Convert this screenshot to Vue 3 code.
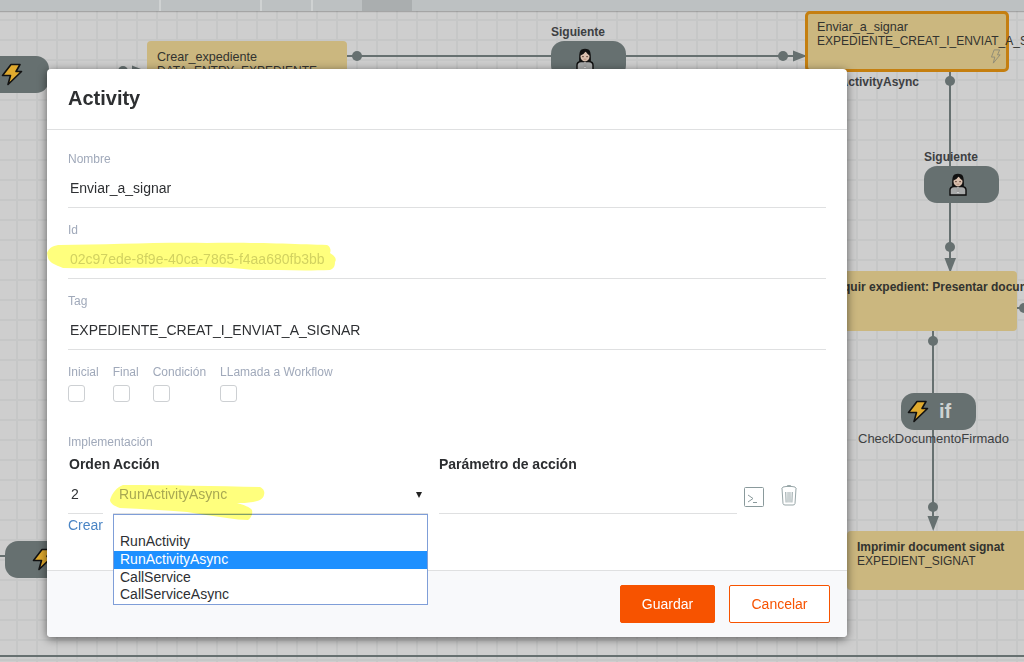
<script setup>
const tabs = [159, 260, 311]

const lines = [
  { x: 347, y: 55, w: 459, h: 2 },
  { x: 0, y: 555, w: 6, h: 2 },
  { x: 949, y: 72, w: 2, h: 186 },
  { x: 932, y: 331, w: 2, h: 190 },
  { x: 1017, y: 307, w: 7, h: 2 },
]

const dots = [
  { x: 123, y: 71 },
  { x: 357, y: 56 },
  { x: 783, y: 56 },
  { x: 950, y: 81 },
  { x: 950, y: 247 },
  { x: 933, y: 341 },
  { x: 933, y: 507 },
  { x: 1024, y: 308 },
]

const arrows = [
  { x: 132, y: 65, dir: 'right' },
  { x: 793, y: 50, dir: 'right' },
  { x: 943, y: 258, dir: 'down' },
  { x: 926, y: 516, dir: 'down' },
]

const tasks = [
  { x: 147, y: 41, w: 200, h: 60, title: 'Crear_expediente', tag: 'DATA_ENTRY_EXPEDIENTE' },
  { x: 817, y: 271, w: 200, h: 60, title: 'Adquir expedient: Presentar document', tag: '', strong: true },
  { x: 847, y: 531, w: 200, h: 59, title: 'Imprimir document signat', tag: 'EXPEDIENT_SIGNAT', strong: true },
]

const pills = [
  { x: -26, y: 56, kind: 'bolt' },
  { x: 5, y: 541, kind: 'bolt' },
  { x: 551, y: 41, kind: 'user', label: 'Siguiente' },
  { x: 924, y: 166, kind: 'user', label: 'Siguiente' },
]

const options = ['RunActivity', 'RunActivityAsync', 'CallService', 'CallServiceAsync']
</script>

<template>
  <div class="page">
    <div class="topbar">
      <span v-for="t in tabs" :key="t" class="topbar__tick" :style="{ left: t + 'px' }"></span>
      <span class="topbar__active"></span>
    </div>

    <section class="canvas">
      <i v-for="(l, i) in lines" :key="'l' + i" class="wire" :style="{ left: l.x + 'px', top: l.y + 'px', width: l.w + 'px', height: l.h + 'px' }"></i>
      <i v-for="(d, i) in dots" :key="'d' + i" class="dot" :style="{ left: d.x - 5 + 'px', top: d.y - 5 + 'px' }"></i>
      <svg v-for="(a, i) in arrows" :key="'a' + i" class="arrow" :style="{ left: a.x + 'px', top: a.y + 'px' }" width="15" height="15" viewBox="0 0 15 15">
        <path v-if="a.dir === 'right'" d="M0 0.5 L14 6 L0 11.5 Z" fill="#667070" />
        <path v-else d="M1.5 0 L13 0 L7.2 15 Z" fill="#667070" />
      </svg>

      <div
        v-for="t in tasks"
        :key="t.title"
        class="task"
        :style="{ left: t.x + 'px', top: t.y + 'px', width: t.w + 'px', height: t.h + 'px' }"
      >
        <div :class="t.strong ? 'task__title--strong' : 'task__title'">{{ t.title }}</div>
        <div>{{ t.tag }}</div>
      </div>

      <div class="task task--selected">
        <div class="task__title">Enviar_a_signar</div>
        <div>EXPEDIENTE_CREAT_I_ENVIAT_A_SIGNAR</div>
        <svg class="task__bolt" width="11" height="15" viewBox="0 0 12 16">
          <path d="M4.5 0.8 L10.5 0.8 L8.2 6.2 L11 6.2 L3.6 15.2 L5.2 8.6 L1.6 8.6 Z" fill="none" stroke="#8d8a76" stroke-width="1" />
        </svg>
      </div>
      <div class="node-caption node-caption--async">RunActivityAsync</div>

      <template v-for="p in pills" :key="p.x">
        <div class="pill" :style="{ left: p.x + 'px', top: p.y + 'px' }">
          <svg v-if="p.kind === 'bolt'" class="bolt" width="22" height="23" viewBox="0 0 22 23">
            <path d="M10 1.5 L19 1.5 L15 8.5 L20.5 8.5 L7 21.5 L9.5 12.5 L1.5 12.5 Z" fill="#e0aa2e" stroke="#111" stroke-width="1.6" stroke-linejoin="round" />
          </svg>
          <svg v-else class="person" width="18" height="23" viewBox="0 0 18 23">
            <path d="M1 22 L1 17 Q1 14 5 13.5 L13 13.5 Q17 14 17 17 L17 22 Z" fill="#a7a9a9" stroke="#0c0c0c" stroke-width="1.4" />
            <path d="M8 14 L10 14 L9.6 20 L8.4 20 Z" fill="#e4e4e4" />
            <path d="M8.4 14 L8.4 19 M9.6 14 L9.6 19" stroke="#5d5d5d" stroke-width="0.5" />
            <path d="M3.2 14 Q2.6 3 5.5 1.6 Q9 -0.2 12.5 1.6 Q15.4 3 14.8 14 Z" fill="#111" />
            <ellipse cx="9" cy="8.5" rx="4.5" ry="5" fill="#d9bfad" />
            <path d="M4.4 7.5 Q8 6.5 9.6 3.6 Q11.5 6.5 13.6 7.5 L13.8 3.6 L9 2 L4.4 3.6 Z" fill="#111" />
            <rect x="6.3" y="8" width="1.3" height="1.2" fill="#50362a" />
            <rect x="10.4" y="8" width="1.3" height="1.2" fill="#50362a" />
            <path d="M7.6 11.2 L10.4 11.2" stroke="#a9806c" stroke-width="0.7" />
          </svg>
        </div>
        <div v-if="p.label" class="node-caption node-caption--pill" :style="{ left: p.x + 'px', top: p.y - 17 + 'px' }">{{ p.label }}</div>
      </template>

      <div class="pill pill--if">
        <svg class="bolt" width="22" height="23" viewBox="0 0 22 23">
          <path d="M10 1.5 L19 1.5 L15 8.5 L20.5 8.5 L7 21.5 L9.5 12.5 L1.5 12.5 Z" fill="#e0aa2e" stroke="#111" stroke-width="1.6" stroke-linejoin="round" />
        </svg>
        <span class="pill__if">if</span>
      </div>
      <div class="node-caption node-caption--check">CheckDocumentoFirmado</div>
      <div class="canvas__floor"></div>
    </section>

    <div class="modal">
      <header class="modal__head">Activity</header>

      <div class="modal__body">
        <div class="field">
          <label>Nombre</label>
          <div class="field__value">Enviar_a_signar</div>
        </div>
        <div class="field">
          <label>Id</label>
          <div class="field__value field__value--disabled">02c97ede-8f9e-40ca-7865-f4aa680fb3bb</div>
        </div>
        <div class="field">
          <label>Tag</label>
          <div class="field__value">EXPEDIENTE_CREAT_I_ENVIAT_A_SIGNAR</div>
        </div>

        <div class="checks">
          <div class="check"><label>Inicial</label><span class="check__box"></span></div>
          <div class="check"><label>Final</label><span class="check__box"></span></div>
          <div class="check"><label>Condición</label><span class="check__box"></span></div>
          <div class="check"><label>LLamada a Workflow</label><span class="check__box"></span></div>
        </div>

        <label class="impl-label">Implementación</label>

        <div class="impl">
          <div class="impl__head impl__head--order">Orden</div>
          <div class="impl__head">Acción</div>
          <div class="impl__head">Parámetro de acción</div>
          <div></div>

          <div class="impl__cell impl__cell--order">2</div>
          <div class="impl__cell impl__cell--action">
            <span class="impl__selected">RunActivityAsync</span>
            <span class="impl__caret"></span>
            <ul class="dropdown">
              <li></li>
              <li v-for="o in options" :key="o" :class="{ 'is-active': o === 'RunActivityAsync' }">{{ o }}</li>
            </ul>
          </div>
          <div class="impl__cell impl__cell--param"></div>
          <div class="impl__tools">
            <svg width="20" height="20" viewBox="0 0 20 20">
              <rect x="0.5" y="0.5" width="19" height="19" rx="1" fill="#fff" stroke="#8a9a9c" />
              <path d="M4 8 L9 11.5 L4 15" fill="none" stroke="#8a9a9c" />
              <path d="M9 15.5 L13 15.5" stroke="#8a9a9c" />
            </svg>
            <svg class="trash" width="16" height="21" viewBox="0 0 16 21">
              <path d="M1 3.5 Q1 1.5 5 1.5 L11 1.5 Q15 1.5 15 3.5 Q15 5 8 5 Q1 5 1 3.5 Z" fill="#fff" stroke="#98a6a8" />
              <path d="M5.5 1.5 Q5.5 0.5 8 0.5 Q10.5 0.5 10.5 1.5" fill="none" stroke="#98a6a8" />
              <path d="M1 3.5 L2 18.5 Q2.2 20 4 20 L12 20 Q13.8 20 14 18.5 L15 3.5" fill="#fff" stroke="#98a6a8" />
              <path d="M4.7 7 L5.1 17.5 M8 7 L8 17.5 M11.3 7 L10.9 17.5" fill="none" stroke="#98a6a8" />
              <path d="M6.3 7 L6.5 17.5 M9.7 7 L9.5 17.5" fill="none" stroke="#c9d1d2" />
            </svg>
          </div>
        </div>
        <a class="create">Crear</a>
      </div>

      <footer class="modal__foot">
        <button class="btn btn--primary">Guardar</button>
        <button class="btn btn--ghost">Cancelar</button>
      </footer>

      <!-- marker strokes someone drew over the screenshot -->
      <svg class="marker" width="800" height="568" viewBox="0 0 800 568">
        <path d="M0 184 C2 178 8 176 13 176 C60 176 110 173 160 174 C200 173 250 175 280 176 C284 178 284 182 283 184 C288 187 290 190 288 193 C288 198 286 200 283 201 C260 202 230 201 206 201 C190 199 175 198 160 198 C110 198 60 200 16 199 C8 196 2 193 1 189 Z" fill="#ffff7d" />
        <path d="M63 431 C65 424 70 418 76 416 C120 416 170 417 213 418 C217 420 218 423 217 426 C216 430 212 432 206 433 C200 434 195 434 190 434 C197 436 203 438 205 441 C206 445 204 449 201 451 C195 451 187 450 180 449 C166 447 152 445 140 443 C118 441 95 440 73 439 C67 437 63 434 63 431 Z" fill="#ffff7d" />
      </svg>
    </div>
  </div>
</template>

<style>
html,
body {
  margin: 0;
  overflow: hidden;
}
</style>

<style scoped>
.page {
  position: relative;
  width: 1024px;
  height: 662px;
  overflow: hidden;
  font-family: 'Liberation Sans', Arial, sans-serif;
  color: #303336;
  background-color: #cecece;
  background-image:
    linear-gradient(to right, #c6c7c7 2px, transparent 2px),
    linear-gradient(to bottom, #c6c7c7 2px, transparent 2px);
  background-size: 20px 20px;
  background-position: 16px 19px;
}

.topbar {
  position: relative;
  height: 11px;
  background: #bdc1c2;
  box-shadow: 0 1px 1px rgba(90, 90, 90, 0.35);
}

.topbar__tick {
  position: absolute;
  top: 0;
  width: 2px;
  height: 11px;
  background: #cfd2d2;
}

.topbar__active {
  position: absolute;
  left: 362px;
  top: 0;
  width: 50px;
  height: 11px;
  background: #aaaeaf;
}

.canvas {
  position: absolute;
  inset: 0;
  font-size: 12px;
}

.canvas__floor {
  position: absolute;
  left: 0;
  right: 0;
  top: 655px;
  height: 2px;
  background: #667070;
}

.wire {
  position: absolute;
  background: #667070;
}

.dot {
  position: absolute;
  width: 10px;
  height: 10px;
  border-radius: 50%;
  background: #667070;
}

.arrow {
  position: absolute;
}

.task {
  position: absolute;
  box-sizing: border-box;
  padding: 9px 10px;
  border-radius: 4px;
  background: #cbb77f;
  color: #32332f;
  font-size: 12px;
  line-height: 14px;
  white-space: nowrap;
}

.task__title {
  font-size: 12.6px;
}

.task__title--strong {
  font-weight: 700;
}

.task--selected {
  left: 805px;
  top: 11px;
  width: 204px;
  height: 61px;
  padding: 6px 9px;
  border: 3px solid #c57f10;
  border-radius: 5px;
}

.task__bolt {
  position: absolute;
  right: 5px;
  top: 35px;
}

.pill {
  position: absolute;
  display: flex;
  align-items: center;
  justify-content: center;
  width: 75px;
  height: 37px;
  border-radius: 13px;
  background: #667070;
}

.bolt {
  flex: none;
}

.person {
  margin: -1px 8px 0 0;
}

.pill--if {
  left: 901px;
  top: 393px;
  justify-content: flex-start;
  gap: 10px;
  padding-left: 6px;
  box-sizing: border-box;
}

.pill__if {
  color: #ced2d2;
  font-size: 20px;
  font-weight: 700;
}

.node-caption {
  position: absolute;
  font-size: 12px;
  line-height: 16px;
  color: #3d4042;
  white-space: nowrap;
}

.node-caption--pill {
  font-weight: 700;
}

.node-caption--async {
  right: 105px;
  top: 74px;
  font-weight: 700;
}

.node-caption--check {
  left: 858px;
  top: 431px;
  font-size: 13px;
}

.modal {
  position: absolute;
  left: 47px;
  top: 69px;
  z-index: 5;
  display: flex;
  flex-direction: column;
  width: 800px;
  height: 568px;
  border-radius: 4px;
  background: #fff;
  box-shadow: 0 2px 10px rgba(0, 0, 0, 0.55);
}

.modal__head {
  box-sizing: border-box;
  height: 61px;
  padding: 17px 21px 0;
  border-bottom: 1px solid #dfe0e1;
  font-size: 20px;
  line-height: 24px;
  font-weight: 700;
  color: #2d2f31;
}

.modal__body {
  flex: 1;
  padding: 19px 21px 0;
}

.field {
  margin-bottom: 12px;
}

label {
  display: block;
  height: 18px;
  font-size: 12px;
  line-height: 20px;
  color: #a0a9ba;
  white-space: nowrap;
}

.field__value {
  box-sizing: border-box;
  height: 41px;
  padding: 11px 2px 0;
  border-bottom: 1px solid #dfe0e1;
  font-size: 14px;
  line-height: 20px;
  color: #2e3033;
}

.field__value--disabled {
  color: #d2d2c4;
}

.checks {
  display: flex;
  gap: 14px;
}

.check__box {
  display: block;
  box-sizing: border-box;
  width: 17px;
  height: 17px;
  margin-top: 5px;
  border: 1px solid #cdd0d3;
  border-radius: 3px;
}

.impl-label {
  margin-top: 30px;
}

.impl {
  display: grid;
  grid-template-columns: 45px 326px 305px 70px;
  grid-template-rows: 20px 40px;
  margin-top: 4px;
}

.impl__head {
  font-size: 14px;
  font-weight: 700;
  line-height: 20px;
  color: #2b2d30;
}

.impl__head--order {
  padding-left: 1px;
}

.impl__cell {
  position: relative;
  box-sizing: border-box;
  height: 30px;
  margin-top: 10px;
  border-bottom: 1px solid #dfe0e1;
  font-size: 14px;
  line-height: 20px;
}

.impl__cell--order {
  width: 35px;
  padding-left: 3px;
}

.impl__cell--action {
  width: 315px;
  padding-left: 6px;
}

.impl__cell--param {
  width: 298px;
}

.impl__selected {
  position: relative;
  z-index: 1;
  color: #a8a8a8;
}

.impl__caret {
  position: absolute;
  right: 6px;
  top: 8px;
  width: 0;
  height: 0;
  border-left: 3px solid transparent;
  border-right: 3px solid transparent;
  border-top: 6px solid #222;
}

.dropdown {
  position: absolute;
  left: 0;
  top: 30px;
  z-index: 3;
  box-sizing: border-box;
  width: 315px;
  height: 91px;
  margin: 0;
  padding: 0;
  list-style: none;
  border: 1px solid #7f9ed8;
  background: #fff;
  font-size: 14px;
  line-height: 17.5px;
  color: #2d2f33;
}

.dropdown li {
  height: 17.5px;
  padding-left: 6px;
}

.dropdown li:nth-child(-n + 2) {
  height: 18px;
}

.dropdown li.is-active {
  background: #1e90ff;
  color: #fff;
}

.impl__tools {
  display: flex;
  align-items: flex-start;
  gap: 17px;
  margin-top: 13px;
}

.trash {
  margin-top: -2px;
}

.create {
  display: block;
  margin-top: 1px;
  font-size: 14px;
  line-height: 20px;
  color: #4a85c5;
}

.modal__foot {
  display: flex;
  justify-content: flex-end;
  gap: 14px;
  box-sizing: border-box;
  height: 67px;
  padding: 14px 17px 0 0;
  border-top: 1px solid #dfe0e1;
  border-radius: 0 0 4px 4px;
  background: #f8f9fb;
}

.btn {
  box-sizing: border-box;
  height: 38px;
  border-radius: 2px;
  border: 1px solid #f75300;
  font-family: 'Liberation Sans', Arial, sans-serif;
  font-size: 14px;
}

.btn--primary {
  width: 95px;
  background: #f75300;
  color: #fff;
}

.btn--ghost {
  width: 101px;
  background: #fff;
  color: #f75300;
}

.marker {
  position: absolute;
  left: 0;
  top: 0;
  z-index: 6;
  pointer-events: none;
  mix-blend-mode: multiply;
}
</style>
